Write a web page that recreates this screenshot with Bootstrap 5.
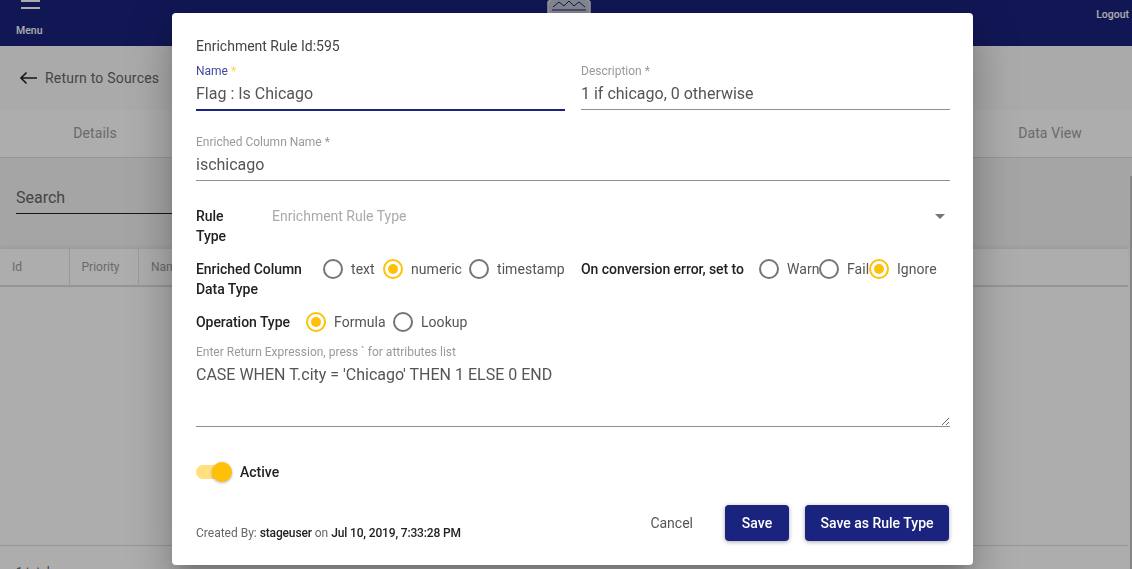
<!DOCTYPE html>
<html lang="en">
<head>
    <meta charset="UTF-8">
    <meta name="viewport" content="width=device-width, initial-scale=1.0">
    <title>Enrichment Rule</title>
    <link href="https://cdn.jsdelivr.net/npm/bootstrap@5.3.0/dist/css/bootstrap.min.css" rel="stylesheet">
    <style>
        html, body{
            height: 100%;
            overflow: hidden;
        }
        body{
            font-family: Roboto, "Liberation Sans", sans-serif;
            color: rgba(0, 0, 0, 0.87);
            background: #fff;
        }
        .top-bar{
            height: 46px;
            background: #1a237e;
            color: #fff;
            overflow: hidden;
        }
        .menu-box{
            width: 60px;
            padding-left: 16px;
        }
        .burger{
            display: block;
            width: 19px;
            height: 9px;
            margin: 0 0 15px 5px;
            border-top: 2px solid #fff;
            border-bottom: 2px solid #fff;
        }
        .menu-text{
            font-size: 10.5px;
            font-weight: 500;
            line-height: 14px;
            margin-top: 1px;
        }
        .logout-text{
            font-size: 10.5px;
            font-weight: 500;
            margin-top: 7px;
            margin-right: 3px;
        }
        .logo-clip{
            left: 547px;
            top: -4px;
        }
        .logo-word{
            font-family: "Liberation Sans", sans-serif;
            font-size: 12px;
            font-weight: 700;
            letter-spacing: 3px;
            fill: #1a237e;
        }
        .back-row{
            height: 64px;
            padding-left: 19px;
            font-size: 14px;
            letter-spacing: .2px;
            color: #666;
            background: #fbfbfb;
        }
        .tab-row{
            height: 48px;
            background: #fff;
            border-bottom: 1px solid #ddd;
            font-size: 14px;
            letter-spacing: .1px;
            color: #9c9c9c;
        }
        .tab-one{
            width: 190px;
            text-align: center;
        }
        .tab-last{
            width: 164px;
            text-align: center;
        }
        .search-zone{
            height: 91px;
            padding: 26px 0 0 16px;
            background: #f3f3f3;
        }
        .search-box{
            padding-top: 2px;
            width: 300px;
            height: 30px;
            border-bottom: 1px solid #222;
            font-size: 16px;
            color: #666;
        }
        .grid-head{
            width: 1128px;
            height: 38px;
            background: #fff;
            border-bottom: 2px solid #ddd;
            box-shadow: 0 -2px 4px rgba(0,0,0,.06);
            font-size: 12px;
            color: #9c9c9c;
        }
        .grid-cell{
            width: 69.5px;
            padding-left: 12px;
            border-right: 1px solid #e4e4e4;
            line-height: 36px;
        }
        .grid-foot{
            left: 0;
            right: 4px;
            top: 545px;
            height: 30px;
            border-top: 1px solid #ddd;
            padding: 17px 0 0 16px;
            font-size: 12px;
            color: #666;
        }
        .page-scroll{
            right: 0;
            top: 176px;
            bottom: 0;
            width: 2px;
            background: #c4c4c4;
        }
        .shade{
            background: rgba(0, 0, 0, 0.32);
            z-index: 10;
        }
        .rule-dialog{
            left: 172px;
            top: 13px;
            width: 801px;
            height: 552px;
            padding: 24px 23px 0 24px;
            background: #fff;
            border-radius: 4px;
            z-index: 20;
            box-shadow: 0 11px 15px -7px rgba(0,0,0,.2), 0 24px 38px 3px rgba(0,0,0,.14), 0 9px 46px 8px rgba(0,0,0,.12);
        }
        .rule-id{
            font-size: 14px;
            line-height: 18px;
            color: #444;
        }
        .two-col{
            gap: 16px;
        }
        .field-wrap{
            flex: 1 1 0;
            min-width: 0;
        }
        .field-label{
            display: block;
            font-size: 12px;
            line-height: 14px;
            color: #999;
            margin: -1px 0 1px;
        }
        .field-label.on{
            color: #3f4a9e;
        }
        .star-on{
            color: #ffd34d;
        }
        .field-value{
            font-size: 16px;
            line-height: 19px;
            padding: 5px 0 6px;
            color: #555;
            border-bottom: 1px solid #8f8f8f;
        }
        .field-value.on{
            border-bottom: 2px solid #1a237e;
            padding-bottom: 6px;
        }
        .name-row{
            padding-top: 10px;
        }
        .col-name-row{
            margin-top: 25px;
        }
        .type-row{
            margin-top: 25px;
            height: 40px;
            font-size: 14px;
            line-height: 20px;
        }
        .bold-label{
            font-weight: 500;
            font-size: 14px;
            line-height: 20px;
            letter-spacing: -.05px;
            color: #222;
        }
        .type-label{
            width: 76px;
        }
        .type-hint{
            color: #aaa;
            font-size: 14px;
        }
        .drop-arrow{
            width: 0;
            height: 0;
            margin: 8px 5px 0 0;
            border-left: 5px solid transparent;
            border-right: 5px solid transparent;
            border-top: 5px solid #757575;
        }
        .radio-row{
            margin-top: 13px;
            height: 40px;
            font-size: 14px;
            line-height: 20px;
        }
        .radio-half{
            flex: 0 0 369px;
            width: 369px;
        }
        .half-gap{
            margin-left: 16px;
        }
        .data-label{
            width: 127px;
        }
        .conv-label{
            width: 178px;
        }
        .ring{
            flex: none;
            display: block;
            width: 20px;
            height: 20px;
            border: 2px solid #757575;
            border-radius: 50%;
            position: relative;
        }
        .ring.on{
            border-color: #ffc107;
        }
        .ring.on::after{
            content: "";
            position: absolute;
            left: 3px;
            top: 3px;
            width: 10px;
            height: 10px;
            border-radius: 50%;
            background: #ffc107;
        }
        .radio-item{
            display: flex;
            align-items: flex-start;
            color: #555;
        }
        .radio-name{
            margin-left: 8px;
            letter-spacing: .05px;
        }
        .text-first{ width: 60px; }
        .num-first{ width: 86px; }
        .warn-item{ width: 60px; }
        .fail-item{ width: 50px; }
        .formula-item{ width: 87px; }
        .oper-row{
            margin-top: 13px;
            height: 20px;
            font-size: 14px;
            line-height: 20px;
        }
        .oper-label{
            width: 110px;
        }
        .expr-wrap{
            margin-top: 14px;
        }
        .expr-box{
            display: block;
            width: 100%;
            height: 67px;
            padding: 5px 0 0;
            border: 0;
            border-bottom: 1px solid #8f8f8f;
            outline: none;
            font-family: inherit;
            font-size: 16px;
            line-height: 20px;
            color: #555;
            background: transparent;
        }
        .active-row{
            margin-top: 33px;
            height: 24px;
            font-size: 14px;
            font-weight: 500;
            color: #222;
        }
        .switch-track{
            position: relative;
            display: block;
            width: 34px;
            height: 14px;
            border-radius: 7px;
            background: #ffdf7e;
            margin-right: 10px;
            flex: none;
        }
        .switch-knob{
            position: absolute;
            right: -2px;
            top: -3px;
            width: 20px;
            height: 20px;
            border-radius: 50%;
            background: #ffc107;
            box-shadow: 0 1px 3px rgba(0,0,0,.3);
        }
        .foot-row{
            margin-top: 21px;
            height: 36px;
            padding-right: 1px;
        }
        .made-by{
            font-size: 12px;
            line-height: 16px;
            color: #666;
            margin-top: 20px;
        }
        .made-by b{
            font-weight: 500;
            letter-spacing: -.15px;
            color: #222;
        }
        .btn-cancel{
            width: 64px;
            padding: 0;
            margin-right: 32px;
            font-size: 14px;
            text-align: right;
            color: #555;
            border: 0;
            background: none;
        }
        .btn-navy{
            height: 36px;
            padding: 0;
            font-size: 14px;
            font-weight: 500;
            color: #fff;
            background: #1a237e;
            border: 0;
            border-radius: 4px;
            box-shadow: 0 1px 4px rgba(0,0,0,.35);
        }
        .btn-save{
            width: 64px;
            margin-right: 16px;
        }
        .btn-save-type{
            width: 144px;
        }
    </style>
</head>
<body>
<header class="top-bar d-flex justify-content-between position-relative">
    <div class="menu-box">
        <span class="burger"></span>
        <div class="menu-text">Menu</div>
    </div>
    <svg class="logo-clip position-absolute" width="44" height="30" viewBox="0 0 44 30">
        <path d="M5 2h34l4 4v24H1V6z" fill="#c8cad8" stroke="#e4e6ee" stroke-width="1.500"/>
        <path d="M6 11l6-5 5 4 5-5 5 5 5-4 6 5" fill="none" stroke="#1a237e" stroke-width="1"/>
        <path d="M5 14h34" stroke="#1a237e" stroke-width="1"/>
        <text class="logo-word" x="7" y="27">DAP</text>
    </svg>
    <div class="logout-text">Logout</div>
</header>
<div class="back-row d-flex align-items-center">
    <svg width="18" height="14" viewBox="0 0 18 14" class="me-2">
        <path d="M18 7H2M7.500 1.500L2 7l5.500 5.500" fill="none" stroke="#222" stroke-width="1.600"/>
    </svg>
    <span>Return to Sources</span>
</div>
<div class="tab-row d-flex justify-content-between align-items-center">
    <div class="tab-one">Details</div>
    <div class="tab-last">Data View</div>
</div>
<div class="search-zone">
    <div class="search-box">Search</div>
</div>
<div class="grid-head d-flex">
    <div class="grid-cell">Id</div>
    <div class="grid-cell">Priority</div>
    <div class="grid-cell">Name</div>
</div>
<div class="grid-foot position-absolute">1 total</div>
<div class="page-scroll position-absolute"></div>

<div class="shade position-fixed top-0 start-0 w-100 h-100"></div>

<div class="rule-dialog position-fixed">
    <div class="rule-id">Enrichment Rule Id:595</div>
    <div class="d-flex two-col name-row">
        <div class="field-wrap">
            <label class="field-label on">Name <span class="star-on">*</span></label>
            <div class="field-value on">Flag : Is Chicago</div>
        </div>
        <div class="field-wrap">
            <label class="field-label">Description *</label>
            <div class="field-value">1 if chicago, 0 otherwise</div>
        </div>
    </div>
    <div class="col-name-row">
        <label class="field-label">Enriched Column Name *</label>
        <div class="field-value">ischicago</div>
    </div>
    <div class="type-row d-flex">
        <div class="bold-label type-label">Rule<br>Type</div>
        <div class="type-hint flex-grow-1">Enrichment Rule Type</div>
        <span class="drop-arrow"></span>
    </div>
    <div class="radio-row d-flex">
        <div class="radio-half d-flex">
            <div class="bold-label data-label">Enriched Column<br>Data Type</div>
            <div class="radio-item text-first"><span class="ring"></span><span class="radio-name">text</span></div>
            <div class="radio-item num-first"><span class="ring on"></span><span class="radio-name">numeric</span></div>
            <div class="radio-item"><span class="ring"></span><span class="radio-name">timestamp</span></div>
        </div>
        <div class="half-gap d-flex">
            <div class="bold-label conv-label">On conversion error, set to</div>
            <div class="radio-item warn-item"><span class="ring"></span><span class="radio-name">Warn</span></div>
            <div class="radio-item fail-item"><span class="ring"></span><span class="radio-name">Fail</span></div>
            <div class="radio-item"><span class="ring on"></span><span class="radio-name">Ignore</span></div>
        </div>
    </div>
    <div class="oper-row d-flex">
        <div class="bold-label oper-label">Operation Type</div>
        <div class="radio-item formula-item"><span class="ring on"></span><span class="radio-name">Formula</span></div>
        <div class="radio-item"><span class="ring"></span><span class="radio-name">Lookup</span></div>
    </div>
    <div class="expr-wrap">
        <label class="field-label">Enter Return Expression, press ` for attributes list</label>
        <textarea class="expr-box">CASE WHEN T.city = 'Chicago' THEN 1 ELSE 0 END</textarea>
    </div>
    <div class="active-row d-flex align-items-center">
        <span class="switch-track"><span class="switch-knob"></span></span>
        <span>Active</span>
    </div>
    <div class="foot-row d-flex justify-content-between">
        <div class="made-by">Created By: <b>stageuser</b> on <b>Jul 10, 2019, 7:33:28 PM</b></div>
        <div class="d-flex align-items-center">
            <button type="button" class="btn-cancel">Cancel</button>
            <button type="button" class="btn-navy btn-save">Save</button>
            <button type="button" class="btn-navy btn-save-type">Save as Rule Type</button>
        </div>
    </div>
</div>
</body>
</html>
